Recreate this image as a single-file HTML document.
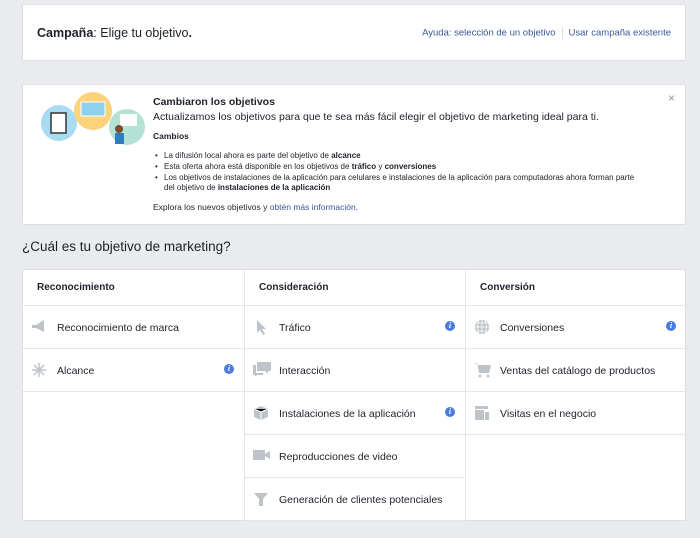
<!DOCTYPE html>
<html><head><meta charset="utf-8"><style>
*{box-sizing:border-box;margin:0;padding:0}
body{width:700px;height:538px;background:#e9ebee;font-family:"Liberation Sans",Arial,sans-serif;color:#1d2129;position:relative;overflow:hidden}
.card{position:absolute;left:22px;width:664px;background:#fff;border:1px solid #dddfe2;border-radius:2px}
a{color:#365899;text-decoration:none}
.hd{top:4px;height:57px}
.hd .t{position:absolute;left:14px;top:21px;font-size:12.5px}
.hd .r{position:absolute;right:14px;top:22px;font-size:9.5px;color:#365899}
.hd .sep{display:inline-block;width:1px;height:12px;background:#dddfe2;margin:0 6px;vertical-align:middle}
.nt{top:84px;height:141px}
.nt .x{position:absolute;right:10px;top:6px;font-size:12px;color:#90949c}
.nt .c{position:absolute;left:130px;top:12px;width:490px;font-size:9px;line-height:11px}
.nt h3{font-size:10.5px;font-weight:bold;margin-bottom:4px}
.nt .big{font-size:10.5px;margin-bottom:8px}
.nt .cb{font-weight:bold;font-size:8.5px;margin-bottom:9px}
.nt ul{list-style:none;font-size:8px;line-height:10.8px;margin-bottom:8px}
.nt li{padding-left:11px;position:relative}
.nt li:before{content:"•";position:absolute;left:2px}
.nt .ex{font-size:8.5px}
.q{position:absolute;left:22px;top:239px;font-size:13.5px}
.tb{position:absolute;left:22px;top:269px;width:664px;height:252px;background:#fff;border:1px solid #dddfe2}
.col{position:absolute;top:0;width:221px;height:251px}
.col+.col{border-left:1px solid #e5e6e9}
.h{height:36px;border-bottom:1px solid #e5e6e9;font-weight:bold;font-size:10px;padding:12px 0 0 14px}
.row{height:43px;border-bottom:1px solid #e5e6e9;position:relative;font-size:10.5px;padding:16px 0 0 34px;color:#1d2129}
.row svg{position:absolute;left:8px;top:13px}
.i{position:absolute;right:10px;top:15px;width:10px;height:10px;border-radius:50%;background:#4a7be0;color:#fff;font:bold italic 8px/10px "Liberation Serif",serif;text-align:center}
</style></head><body>
<div class="card hd"><div class="t"><b>Campaña</b>: Elige tu objetivo<b>.</b></div>
<div class="r">Ayuda: selección de un objetivo<span class="sep"></span>Usar campaña existente</div></div>
<div class="card nt"><div class="x">×</div>
<svg style="position:absolute;left:14px;top:4px" width="112" height="62">
<circle cx="22" cy="34" r="18" fill="#a9dcf2"/><rect x="14" y="24" width="15" height="20" fill="#fff" stroke="#333" stroke-width="1.5"/>
<circle cx="56" cy="22" r="19" fill="#fcd27a"/><rect x="44" y="13" width="24" height="14" fill="#8fd0ee" stroke="#fff"/>
<circle cx="90" cy="38" r="18" fill="#b4e3d5"/><rect x="83" y="25" width="17" height="12" fill="#fff"/><circle cx="82" cy="40" r="4" fill="#7a4a2a"/><rect x="78" y="44" width="9" height="11" fill="#2b7ec0"/>
</svg>
<div class="c"><h3>Cambiaron los objetivos</h3>
<div class="big">Actualizamos los objetivos para que te sea más fácil elegir el objetivo de marketing ideal para ti.</div>
<div class="cb">Cambios</div>
<ul><li>La difusión local ahora es parte del objetivo de <b>alcance</b></li>
<li>Esta oferta ahora está disponible en los objetivos de <b>tráfico</b> y <b>conversiones</b></li>
<li>Los objetivos de instalaciones de la aplicación para celulares e instalaciones de la aplicación para computadoras ahora forman parte del objetivo de <b>instalaciones de la aplicación</b></li></ul>
<div class="ex">Explora los nuevos objetivos y <a>obtén más información</a>.</div></div></div>
<div class="q">¿Cuál es tu objetivo de marketing?</div>
<div class="tb">
<div class="col" style="left:0">
<div class="h">Reconocimiento</div>
<div class="row"><svg width="16" height="14"><path d="M1 6h4l8-5v12L5 9H1z" fill="#bec3c9"/></svg>Reconocimiento de marca</div>
<div class="row"><svg width="16" height="16"><g stroke="#bec3c9" stroke-width="1.5"><path d="M8 1v14M1 8h14M3 3l10 10M13 3L3 13"/></g><circle cx="8" cy="8" r="2" fill="#bec3c9"/></svg>Alcance<span class="i">i</span></div>
</div>
<div class="col" style="left:221px">
<div class="h">Consideración</div>
<div class="row"><svg width="16" height="16"><path d="M4 1v13l3-3 3 5 2-1-3-5h4z" fill="#bec3c9"/></svg>Tráfico<span class="i">i</span></div>
<div class="row"><svg width="18" height="14"><path d="M4 0h14v9h-3v3l-3-3H4z" fill="#bec3c9"/><path d="M0 3h3v8h7v2H4l-2 2v-2H0z" fill="#bec3c9"/></svg>Interacción</div>
<div class="row"><svg width="16" height="16"><path d="M8 1l7 3v8l-7 3-7-3V4z" fill="#bec3c9"/><path d="M1 4l7 3 7-3M8 7v8" stroke="#fff"/></svg>Instalaciones de la aplicación<span class="i">i</span></div>
<div class="row"><svg width="18" height="14"><rect x="0" y="2" width="12" height="10" fill="#bec3c9"/><path d="M12 6l5-3v8l-5-3z" fill="#bec3c9"/></svg>Reproducciones de video</div>
<div class="row"><svg width="16" height="16"><path d="M1 2h14l-5 6v7H6V8z" fill="#bec3c9"/></svg>Generación de clientes potenciales</div>
</div>
<div class="col" style="left:442px">
<div class="h">Conversión</div>
<div class="row"><svg width="16" height="16"><circle cx="8" cy="8" r="7" fill="#bec3c9"/><path d="M1 8h14M8 1v14M3 4h10M3 12h10M5 2q-3 6 0 12M11 2q3 6 0 12" stroke="#fff" fill="none" stroke-width=".8"/></svg>Conversiones<span class="i">i</span></div>
<div class="row"><svg width="18" height="16"><path d="M0 1h3l2 10h10l2-8H4" fill="#bec3c9"/><circle cx="6" cy="14" r="1.5" fill="#bec3c9"/><circle cx="14" cy="14" r="1.5" fill="#bec3c9"/></svg>Ventas del catálogo de productos</div>
<div class="row"><svg width="16" height="16"><rect x="1" y="1" width="13" height="3" fill="#bec3c9"/><rect x="1" y="5" width="9" height="10" fill="#bec3c9"/><rect x="11" y="7" width="4" height="8" fill="#bec3c9"/></svg>Visitas en el negocio</div>
</div>
</div>
</body></html>
